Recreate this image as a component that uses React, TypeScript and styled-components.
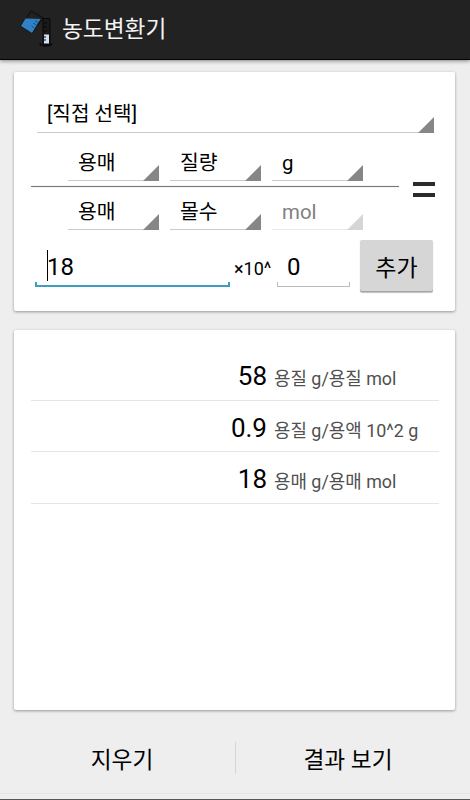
import React from "react";
import styled, { createGlobalStyle } from "styled-components";

const Global = createGlobalStyle`
  * { box-sizing: border-box; }
  body { margin: 0; background: #eee; }
  button, input { font: inherit; }
`;

const Screen = styled.div`
  width: 470px;
  height: 800px;
  display: flex;
  flex-direction: column;
  overflow: hidden;
  background: #eee;
  color: #000;
  font-family: Roboto, "Noto Sans CJK KR", sans-serif;
  border-bottom: 1px solid #555;
`;

const Header = styled.header`
  height: 60px;
  flex: none;
  display: flex;
  align-items: center;
  padding: 0 0 2px 20px;
  background: #222;
  border-bottom: 1px solid #050505;
  box-shadow: 0 1px 4px rgba(0, 0, 0, 0.45);
`;

const Title = styled.h1`
  margin: 2px 0 0 10px;
  color: #f3f3f3;
  font-size: 22.7px;
  line-height: 30px;
  font-weight: 400;
`;

const Card = styled.section<{ $height: number; $top: number }>`
  height: ${(p) => p.$height}px;
  flex: none;
  margin: ${(p) => p.$top}px 15px 0 14px;
  background: #fff;
  border-radius: 2px;
  box-shadow: 0 1px 3px rgba(0, 0, 0, 0.38);
`;

const Dropdown = styled.div<{ $disabled?: boolean; $wide?: boolean }>`
  width: ${(p) => (p.$wide ? 397 : 91)}px;
  height: 38px;
  flex: none;
  display: flex;
  align-items: flex-end;
  justify-content: space-between;
  padding-left: 10px;
  border-bottom: 1px solid ${(p) => (p.$disabled ? "#e8e8e8" : "#cacaca")};
  color: ${(p) => (p.$disabled ? "#808080" : "#000")};
  font-size: ${(p) => (p.$wide ? 20.2 : 20.4)}px;

  span {
    line-height: ${(p) => (p.$wide ? 36 : 34)}px;
    white-space: pre;
  }

  &::after {
    content: "";
    width: 16px;
    height: 16px;
    margin-bottom: -1px;
    background: ${(p) => (p.$disabled ? "#d5d5d5" : "#868686")};
    clip-path: polygon(100% 0, 100% 100%, 0 100%);
  }
`;

const Preset = styled.div`
  padding: 23px 0 0 23px;
`;

const Equation = styled.div`
  display: flex;
  align-items: center;
  padding: 10px 0 0 17px;
`;

const Fraction = styled.div`
  width: 368px;
`;

const FractionRow = styled.div`
  display: flex;
  gap: 11px;
  padding-left: 37px;
`;

const FractionBar = styled.div`
  height: 1px;
  margin: 5px 0 5px;
  background: #777;
  box-shadow: 0 0 1px #999;
`;

const EqualsSign = styled.div`
  width: 22px;
  height: 15px;
  margin: 6px 0 0 14px;
  border: solid #2b2b2b;
  border-width: 4px 0;
`;

const EntryRow = styled.div`
  display: flex;
  align-items: flex-start;
  padding: 10px 0 0 21px;
`;

const Field = styled.div<{ $width: number; $active?: boolean }>`
  width: ${(p) => p.$width}px;
  height: 47px;
  display: flex;
  align-items: center;
  padding: 7px 0 0 ${(p) => (p.$active ? 13 : 10)}px;
  font-size: 24px;
  line-height: 30px;
  background:
    linear-gradient(${(p) => (p.$active ? "#3b9fbd, #3b9fbd" : "#bbb, #bbb")}) left bottom / 100% ${(p) => (p.$active ? 2 : 1)}px no-repeat,
    linear-gradient(${(p) => (p.$active ? "#3b9fbd, #3b9fbd" : "#bbb, #bbb")}) left bottom / ${(p) => (p.$active ? 2 : 1)}px 5px no-repeat,
    linear-gradient(${(p) => (p.$active ? "#3b9fbd, #3b9fbd" : "#bbb, #bbb")}) right bottom / ${(p) => (p.$active ? 2 : 1)}px 5px no-repeat;
`;

const Caret = styled.i`
  width: 1px;
  height: 31px;
  margin: -3px -1px 0 -1px;
  background: #000;
`;

const Power = styled.span`
  width: 47px;
  padding-left: 4px;
  font-size: 18px;
  line-height: 58px;
  white-space: nowrap;
`;

const AddButton = styled.button`
  width: 73px;
  height: 52px;
  margin-left: 10px;
  padding: 0;
  border: 0;
  border-radius: 2px;
  background: #d6d6d6;
  box-shadow: inset 0 -1px #a5a5a5, 0 1px 1px rgba(0, 0, 0, 0.25);
  color: #000;
  font-size: 23px;
`;

const Results = styled.ul`
  list-style: none;
  margin: 0;
  padding: 19px 16px 0 17px;
`;

const ResultRow = styled.li`
  height: 51.5px;
  display: flex;
  align-items: baseline;
  border-bottom: 1px solid #e5e5e5;
  line-height: 54px;
`;

const Value = styled.strong`
  width: 236px;
  text-align: right;
  font-weight: 400;
  font-size: 26px;
`;

const Unit = styled.span`
  margin-left: 7px;
  color: #505050;
  font-size: 17.9px;
  white-space: nowrap;
`;

const Footer = styled.footer`
  height: 84px;
  flex: none;
  display: grid;
  grid-template-columns: 235px 1px 224px;
  align-items: center;
  padding-top: 12px;
  border-bottom: 1px solid #e5e5e5;
`;

const FooterButton = styled.button<{ $offset: number }>`
  height: 48px;
  padding: 2px 0 0 ${(p) => p.$offset}px;
  border: 0;
  background: none;
  color: #000;
  font-size: 22.7px;
`;

const Divider = styled.div`
  width: 1px;
  height: 32px;
  background: #d5d5d5;
`;

const LabIcon = () => (
  <svg width="32" height="40" viewBox="0 0 32 40" fill="none">
    <path d="M11 2 23 9 12 24 1 17Z" stroke="#101214" strokeWidth="1.2" />
    <path d="M5.5 9.5 20.5 10 12 24 1 17Z" fill="#3182c4" />
    <path d="M15 11.500 18 13.500M13 14l3.500 2M11.500 17l3 2" stroke="#14527e" />
    <path d="M23 9.500v26h7v-26Z" fill="#191919" stroke="#080808" />
    <path d="M24 25.500h5v9h-5z" fill="#cfdef1" />
    <path d="M23 14h4M23 18h3M23 22h4M23 28h3M23 31h3" stroke="#080808" />
    <path d="M20 34c0 4 12 4 12 0" stroke="#080808" strokeWidth="1.5" />
  </svg>
);

const results = [
  { value: "58", unit: "용질 g/용질 mol" },
  { value: "0.9", unit: "용질 g/용액 10^2 g" },
  { value: "18", unit: "용매 g/용매 mol" },
];

export default function App() {
  return (
    <Screen lang="ko">
      <Global />
      <Header>
        <LabIcon />
        <Title>농도변환기</Title>
      </Header>
      <Card $height={239} $top={12}>
        <Preset>
          <Dropdown $wide><span>[직접 선택]</span></Dropdown>
        </Preset>
        <Equation>
          <Fraction>
            <FractionRow>
              <Dropdown><span>용매</span></Dropdown>
              <Dropdown><span>질량</span></Dropdown>
              <Dropdown><span>g</span></Dropdown>
            </FractionRow>
            <FractionBar />
            <FractionRow>
              <Dropdown><span>용매</span></Dropdown>
              <Dropdown><span>몰수</span></Dropdown>
              <Dropdown $disabled><span>mol</span></Dropdown>
            </FractionRow>
          </Fraction>
          <EqualsSign />
        </Equation>
        <EntryRow>
          <Field $width={195} $active><Caret />18</Field>
          <Power>×10^</Power>
          <Field $width={73}>0</Field>
          <AddButton>추가</AddButton>
        </EntryRow>
      </Card>
      <Card $height={380} $top={19}>
        <Results>
          {results.map((r) => (
            <ResultRow key={r.unit}>
              <Value>{r.value}</Value>
              <Unit>{r.unit}</Unit>
            </ResultRow>
          ))}
        </Results>
      </Card>
      <Footer>
        <FooterButton $offset={9}>지우기</FooterButton>
        <Divider />
        <FooterButton $offset={0}>결과 보기</FooterButton>
      </Footer>
    </Screen>
  );
}
